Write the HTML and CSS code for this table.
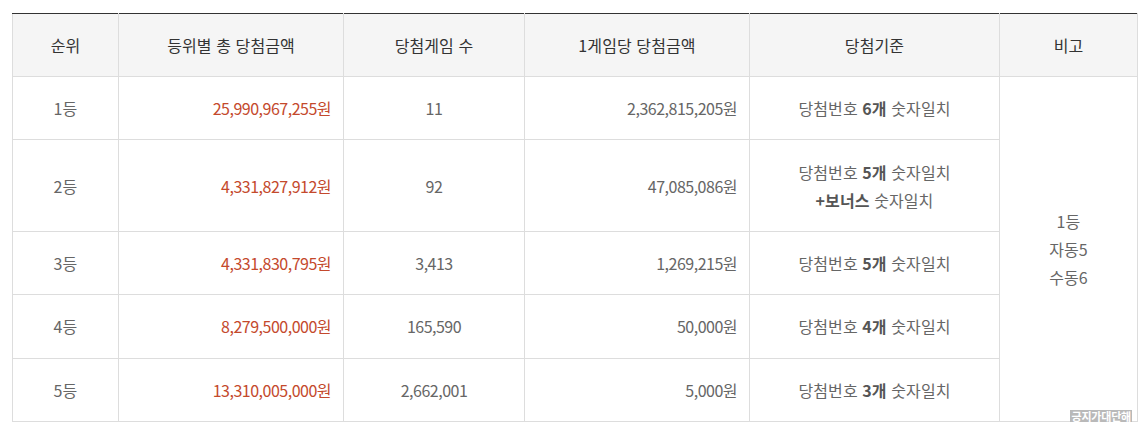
FILE: index.html
```html
<!DOCTYPE html>
<html lang="ko">
<head>
<meta charset="utf-8">
<link rel="stylesheet" href="styles.css">
</head>
<body>
<div class="wrap">
  <table class="prize">
    <colgroup>
      <col class="c1"><col class="c2"><col class="c3"><col class="c4"><col class="c5"><col class="c6">
    </colgroup>
    <thead>
      <tr>
        <th>순위</th>
        <th>등위별 총 당첨금액</th>
        <th>당첨게임 수</th>
        <th>1게임당 당첨금액</th>
        <th>당첨기준</th>
        <th>비고</th>
      </tr>
    </thead>
    <tbody>
      <tr>
        <td>1등</td>
        <td class="num red">25,990,967,255원</td>
        <td class="cnt">11</td>
        <td class="num">2,362,815,205원</td>
        <td>당첨번호 <strong>6개</strong> 숫자일치</td>
        <td class="note" rowspan="5">1등<br>자동5<br>수동6</td>
      </tr>
      <tr>
        <td>2등</td>
        <td class="num red">4,331,827,912원</td>
        <td class="cnt">92</td>
        <td class="num">47,085,086원</td>
        <td>당첨번호 <strong>5개</strong> 숫자일치<br><strong>+보너스</strong> 숫자일치</td>
      </tr>
      <tr>
        <td>3등</td>
        <td class="num red">4,331,830,795원</td>
        <td class="cnt">3,413</td>
        <td class="num">1,269,215원</td>
        <td>당첨번호 <strong>5개</strong> 숫자일치</td>
      </tr>
      <tr>
        <td>4등</td>
        <td class="num red">8,279,500,000원</td>
        <td class="cnt">165,590</td>
        <td class="num">50,000원</td>
        <td>당첨번호 <strong>4개</strong> 숫자일치</td>
      </tr>
      <tr>
        <td>5등</td>
        <td class="num red">13,310,005,000원</td>
        <td class="cnt">2,662,001</td>
        <td class="num">5,000원</td>
        <td>당첨번호 <strong>3개</strong> 숫자일치</td>
      </tr>
    </tbody>
  </table>
  <span class="stamp">긍지가대단해</span>
</div>
</body>
</html>
```

FILE: styles.css
```css
html, body {
  margin: 0;
  padding: 0;
  background: #fff;
}
body {
  font-family: "Noto Sans CJK KR", "Noto Sans", sans-serif;
}
.wrap {
  position: relative;
  padding: 13px 0 0 12px;
  width: 1125px;
}
.prize {
  border-collapse: collapse;
  width: 1125px;
  table-layout: fixed;
  border-top: 1px solid #333;
}
.c1 { width: 106px; }
.c2 { width: 225px; }
.c3 { width: 181px; }
.c4 { width: 225px; }
.c5 { width: 250px; }
.c6 { width: 138px; }
.prize th {
  background: #f5f5f5;
  color: #333;
  font-weight: normal;
  font-size: 16px;
  height: 62px;
  padding: 0 12px;
  border: 1px solid #ddd;
  border-top: 1px solid #333;
  text-align: center;
  letter-spacing: 0.1px;
}
.prize td {
  color: #666;
  font-size: 16px;
  line-height: 28px;
  padding: 17.2px 12px;
  border: 1px solid #ddd;
  text-align: center;
  letter-spacing: 0.1px;
}
.prize td.num,
.prize td.cnt {
  letter-spacing: -0.5px;
}
.prize td.num {
  text-align: right;
}
.prize td.red {
  color: #c4492c;
}
.prize td strong {
  color: #555;
  font-weight: bold;
}
.prize td.note {
  vertical-align: middle;
}
.stamp {
  position: absolute;
  right: 5px;
  bottom: -1px;
  background: #b9b9b9;
  color: #fff;
  font-size: 11px;
  font-weight: bold;
  line-height: 13px;
  padding: 0 1px;
  letter-spacing: -0.2px;
}
```
